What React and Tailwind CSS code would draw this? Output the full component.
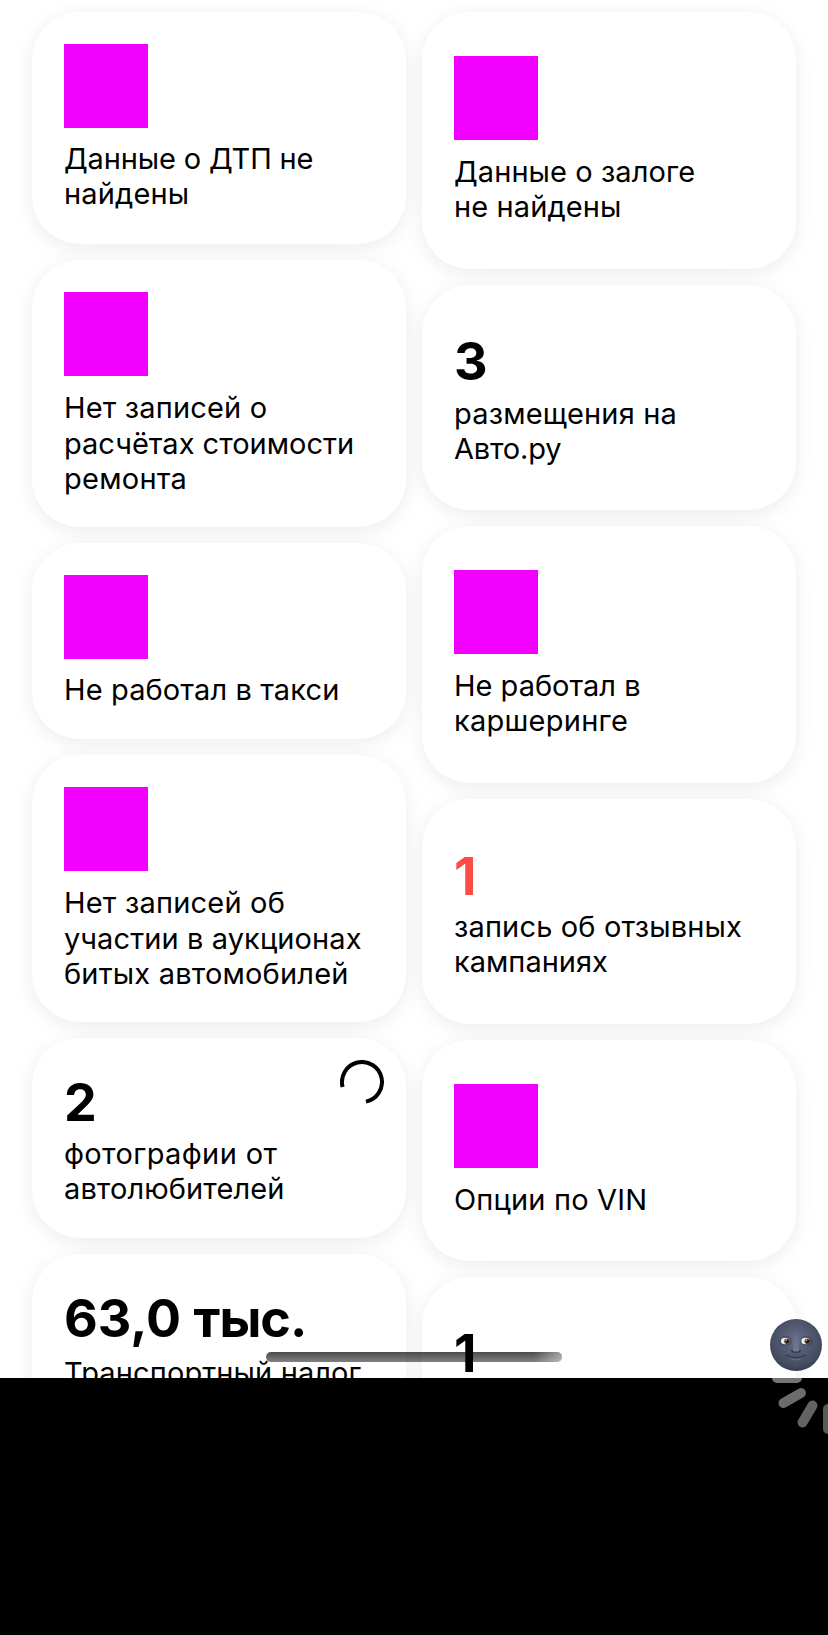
const leftCards = [
  { h: "h-[232px]", icon: true, shift: "mt-[13px]", lines: [["Данные о ДТП не", "tracking-[-0.15px]"], ["найдены", "tracking-[0.15px]"]] },
  { h: "h-[267px]", icon: true, shift: "mt-3.5", loose: true, lines: [["Нет записей о", "tracking-[0.17px]"], ["расчётах стоимости", "tracking-[0px]"], ["ремонта", "tracking-[0.25px]"]] },
  { h: "h-[196px]", icon: true, shift: "mt-[13px]", lines: [["Не работал в такси", "tracking-[0.12px]"]] },
  { h: "h-[267px]", icon: true, shift: "mt-3.5", loose: true, lines: [["Нет записей об", "tracking-[0.2px]"], ["участии в аукционах", "tracking-[0.1px]"], ["битых автомобилей", "tracking-[0.18px]"]] },
  { h: "h-[200px]", value: "2", lead: "pt-px", shift: "mt-px", busy: true, lines: [["фотографии от", "tracking-[0.36px]"], ["автолюбителей", "tracking-[0.1px]"]] },
  { h: "h-[240px]", value: "63,0 ", unit: "тыс.", lead: "pt-px", shift: "mt-1", lines: [["Транспортный налог", "tracking-[0.12px]"]] },
];

const rightCards = [
  { h: "h-[257px]", icon: true, shift: "mt-3.5", lines: [["Данные о залоге", "tracking-[0.07px]"], ["не найдены", "tracking-[0.1px]"]] },
  { h: "h-[225px]", value: "3", lead: "pt-px", shift: "mt-0.5", lines: [["размещения на", "tracking-[0.18px]"], ["Авто.ру", "tracking-[-0.2px]"]] },
  { h: "h-[257px]", icon: true, shift: "mt-3.5", lines: [["Не работал в", "tracking-[0px]"], ["каршеринге", "tracking-[0.25px]"]] },
  { h: "h-[225px]", value: "1", lead: "pt-0.5", color: "text-[#fa4b46]", shift: "mt-0", lines: [["запись об отзывных", "tracking-[0.15px]"], ["кампаниях", "tracking-[0px]"]] },
  { h: "h-[221px]", icon: true, shift: "mt-3.5", lines: [["Опции по VIN", "tracking-[0.17px]"]] },
  { h: "h-[240px]", value: "1", lead: "pt-px", shift: "mt-0", lines: [] },
];

function Card({ card, pad }) {
  return (
    <section className={`relative shrink-0 rounded-[48px] bg-white px-8 shadow-[0_4px_20px_rgba(0,0,0,0.08)] ${pad} ${card.h}`}>
      {card.icon && <div className="size-[84px] bg-[#f200ff]" />}
      {card.value && (
        <div className={`whitespace-pre text-[52px] font-bold leading-[64px] ${card.lead} ${card.color || ""}`}>
          {card.value}
          {card.unit && <span className="tracking-[-1px]">{card.unit}</span>}
        </div>
      )}
      <div className={`whitespace-nowrap text-[29px] ${card.loose ? "leading-[35.5px]" : "leading-[35px]"} ${card.shift}`}>
        {card.lines.map(([text, tracking]) => (
          <p key={text} className={tracking}>{text}</p>
        ))}
      </div>
      {card.busy && (
        <svg className="absolute right-[22px] top-[22px] size-11" viewBox="0 0 44 44" fill="none">
          <path d="M2.6 27A20 20 0 1 1 26 41.6" stroke="#000" strokeWidth="4" />
        </svg>
      )}
    </section>
  );
}

function Moon() {
  return (
    <svg className="absolute left-[770px] top-[1319px] size-[52px]" viewBox="0 0 52 52">
      <defs>
        <radialGradient id="moon" cx="50%" cy="40%" r="62%">
          <stop offset="0" stopColor="#666e89" />
          <stop offset="0.5" stopColor="#50586f" />
          <stop offset="0.85" stopColor="#424a60" />
          <stop offset="1" stopColor="#30374a" />
        </radialGradient>
        <linearGradient id="nose" x1="0" y1="0" x2="0" y2="1">
          <stop offset="0" stopColor="#727a95" stopOpacity="0" />
          <stop offset="1" stopColor="#727a95" />
        </linearGradient>
      </defs>
      <circle cx="26" cy="26" r="26" fill="url(#moon)" />
      <ellipse cx="15.5" cy="22" rx="6.5" ry="5" fill="#394157" opacity="0.5" />
      <ellipse cx="36.5" cy="22" rx="6.5" ry="5" fill="#394157" opacity="0.5" />
      <path d="M24.5 12h3l1.5 20q-3 2-6 0z" fill="url(#nose)" />
      <path d="M21.600 31.500q2 2.500 4.400 1.500 2.400 1 4.400-1.500" fill="none" stroke="#31384b" strokeWidth="1.300" strokeLinecap="round" />
      <path d="M16.500 36.200q9.500 5 19 0" fill="none" stroke="#343b4f" strokeWidth="1.200" strokeLinecap="round" />
      <path d="M21 39.800q5 2 10 0" fill="none" stroke="#666e88" strokeWidth="1.200" strokeLinecap="round" />
      <ellipse cx="15.200" cy="22" rx="4.300" ry="3.200" fill="#f0ebe8" />
      <ellipse cx="35.600" cy="22" rx="4.300" ry="3.200" fill="#f0ebe8" />
      <circle cx="17" cy="22.200" r="2.800" fill="#694438" />
      <circle cx="37.400" cy="22.200" r="2.800" fill="#694438" />
      <circle cx="17.200" cy="22.200" r="1.500" fill="#17100f" />
      <circle cx="37.600" cy="22.200" r="1.500" fill="#17100f" />
      <circle cx="16.300" cy="21.200" r="0.600" fill="#fff" />
      <circle cx="36.700" cy="21.200" r="0.600" fill="#fff" />
    </svg>
  );
}

export default function App() {
  return (
    <div className="relative h-[1635px] w-[828px] overflow-hidden bg-black font-['Inter',sans-serif] text-black">
      <main className="flex h-[1378px] gap-4 overflow-hidden bg-white px-8 pt-3">
        <div className="flex w-[374px] flex-col gap-4">
          {leftCards.map((c, i) => <Card key={i} card={c} pad="pt-8" />)}
        </div>
        <div className="flex w-[374px] flex-col gap-4">
          {rightCards.map((c, i) => <Card key={i} card={c} pad="pt-11" />)}
        </div>
      </main>
      <svg className="absolute left-[768px] top-[1378px] size-[60px]" viewBox="0 0 60 60" fill="none" strokeWidth="10" strokeLinecap="round">
        <path d="M9 0H29" stroke="#747474" />
        <path d="M15.500 25L33 15" stroke="#6c6c6c" />
        <path d="M34.500 44.500L44.500 27.500" stroke="#636363" />
        <path d="M60 31V51" stroke="#5a5a5a" />
      </svg>
      <div className="absolute left-[266px] top-[1352px] h-[10px] w-[296px] overflow-hidden rounded-full bg-gradient-to-b from-black/70 to-black/50">
        <div className="ml-auto h-full w-7 bg-gradient-to-r from-transparent to-white/45" />
      </div>
      <Moon />
    </div>
  );
}
